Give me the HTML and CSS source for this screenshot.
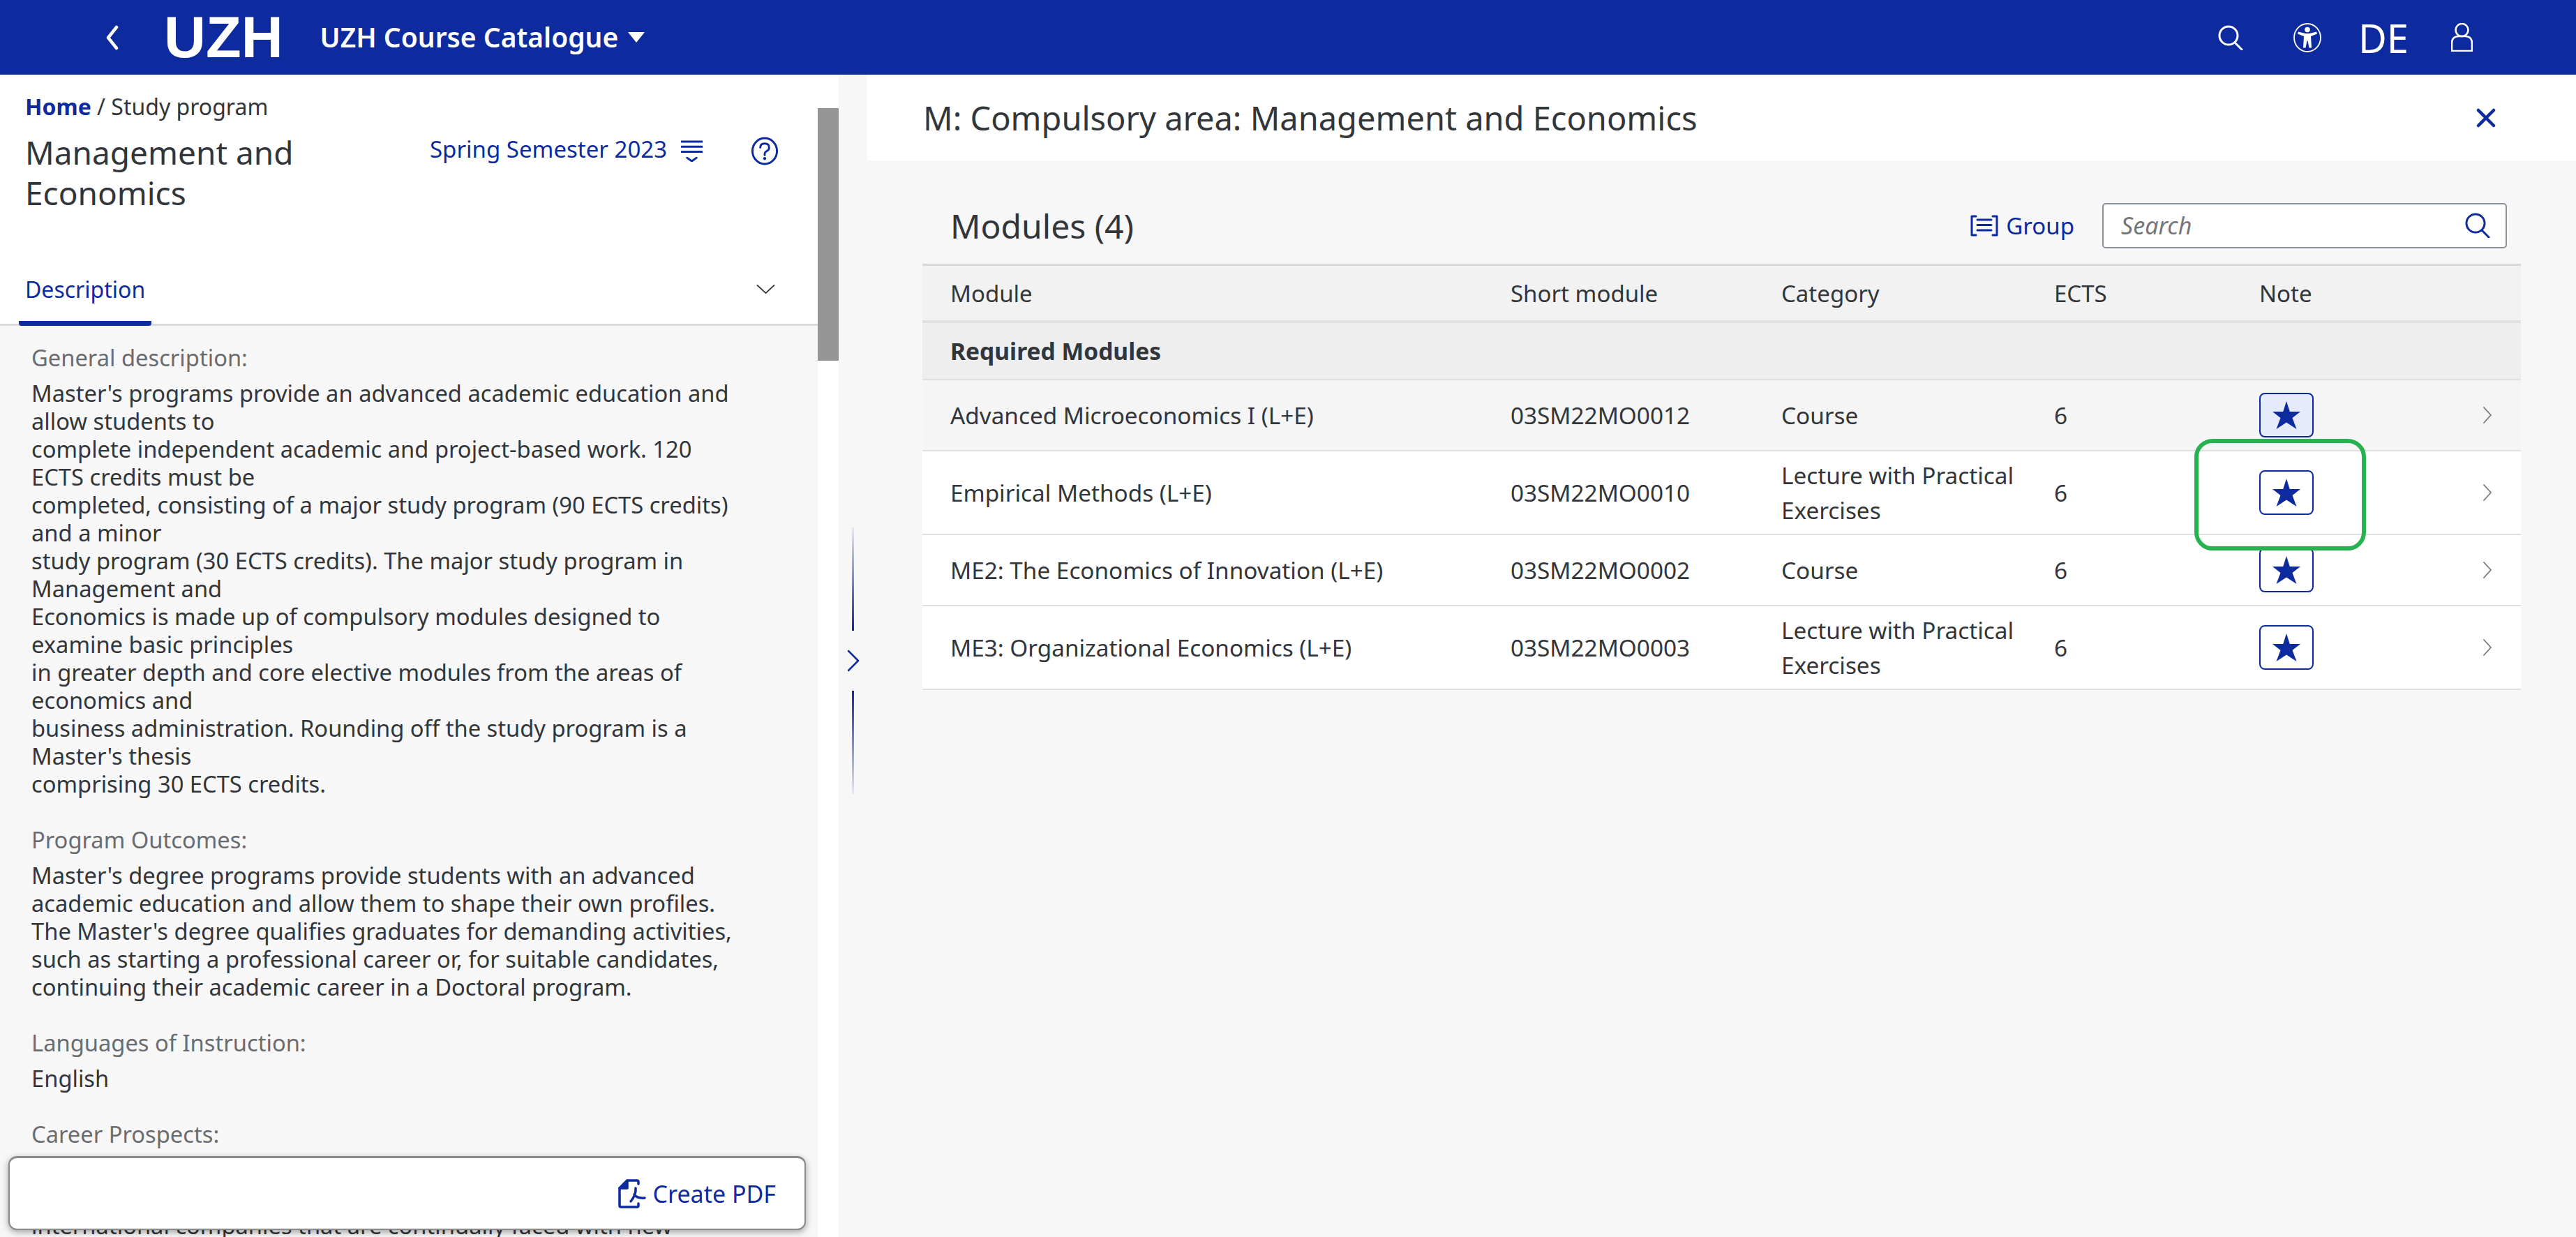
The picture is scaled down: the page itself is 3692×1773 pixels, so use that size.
FILE: index.html
```html
<!DOCTYPE html>
<html lang="en">
<head>
    <meta charset="UTF-8">
    <title>UZH Course Catalogue</title>
    <link rel="stylesheet" href="styles.css">
</head>
<body>
    <header class="shell">
        <svg class="back" viewBox="0 0 20 36"><path d="M17 3 5 18l12 15"/></svg>
        <span class="logo">UZH</span>
        <span class="app-title">UZH Course Catalogue</span>
        <span class="caret"></span>
        <div class="shell-right">
            <svg class="shell-search" viewBox="0 0 36 36"><circle cx="15" cy="15" r="13"/><path d="m24 25 10 10"/></svg>
            <svg class="shell-access" viewBox="0 0 40 42"><ellipse cx="20" cy="21" rx="19" ry="20"/><circle class="fill" cx="20" cy="9.500" r="3.800"/><path class="fill" d="M7 12.500 17 15h6l10-2.500 1 3-9 3.500 1 16.500h-3.500l-2-10h-1l-2 10H14l1-16.500L6 15.500z"/></svg>
            <span class="lang">DE</span>
            <svg class="shell-user" viewBox="0 0 31 41"><circle cx="15.500" cy="10" r="9"/><path d="M1 40V29q0-10 10-10h9q10 0 10 10v11z"/></svg>
        </div>
    </header>

    <main class="layout">
        <section class="left-pane">
            <div class="left-top">
                <div class="crumbs"><a>Home</a> / Study program</div>
                <div class="title-row">
                    <h1>Management and Economics</h1>
                    <span class="semester">Spring Semester 2023</span>
                    <svg class="sem-icon" viewBox="0 0 32 32"><path d="M1 2h30M1 9.500h30M1 17h30M9 26l7 5 7-5"/></svg>
                    <svg class="help" viewBox="0 0 40 42"><ellipse cx="20" cy="21" rx="18" ry="19"/><path d="M13.500 16q0-6 6.500-6t6.500 6q0 3.500-3.500 5t-3 6"/><circle class="fill" cx="20" cy="32" r="2.200"/></svg>
                </div>
                <div class="tabs">
                    <span class="tab">Description</span>
                    <svg class="tab-arrow" viewBox="0 0 28 14"><path d="m1 1 13 12L27 1"/></svg>
                </div>
            </div>
            <div class="left-body">
                <h4>General description:</h4>
                <p>Master's programs provide an advanced academic education and allow students to<br>complete independent academic and project-based work. 120 ECTS credits must be<br>completed, consisting of a major study program (90 ECTS credits) and a minor<br>study program (30 ECTS credits). The major study program in Management and<br>Economics is made up of compulsory modules designed to examine basic principles<br>in greater depth and core elective modules from the areas of economics and<br>business administration. Rounding off the study program is a Master's thesis<br>comprising 30 ECTS credits.</p>
                <h4>Program Outcomes:</h4>
                <p>Master's degree programs provide students with an advanced academic education and allow them to shape their own profiles. The Master's degree qualifies graduates for demanding activities, such as starting a professional career or, for suitable candidates, continuing their academic career in a Doctoral program.</p>
                <h4>Languages of Instruction:</h4>
                <p>English</p>
                <h4>Career Prospects:</h4>
                <p class="under-bar">international companies that are continually faced with new</p>
            </div>
            <div class="pdf-bar">
                <svg class="pdf-icon" viewBox="0 0 40 42"><path d="M29 7V4q0-2-2-2H13L2 13v25q0 2 2 2h23q2 0 2-2v-3"/><path class="corner" d="M13 2 2 13h11z"/><path d="M25 13q1 9-7 19M23 22q4 6 15 5"/></svg>
                <span>Create PDF</span>
            </div>
        </section>

        <div class="scroll-track"><div class="scroll-thumb"></div></div>

        <div class="splitter">
            <span class="split-line up"></span>
            <svg class="split-arrow" viewBox="0 0 18 32"><path d="m2 2 14 14L2 30"/></svg>
            <span class="split-line down"></span>
        </div>

        <section class="right-pane">
            <div class="right-head">
                <h2>M: Compulsory area: Management and Economics</h2>
                <svg class="close" viewBox="0 0 28 28"><path d="m3 3 22 22M25 3 3 25"/></svg>
            </div>
            <div class="right-body">
                <div class="toolbar">
                    <h3>Modules (4)</h3>
                    <svg class="group-icon" viewBox="0 0 40 31"><path d="M8 2H2v27h6M32 2h6v27h-6M10 7h20M10 14.500h20M10 22h20"/></svg>
                    <span class="group-text">Group</span>
                    <div class="search">
                        <span>Search</span>
                        <svg viewBox="0 0 36 36"><circle cx="15" cy="15" r="13"/><path d="m24 25 10 10"/></svg>
                    </div>
                </div>
                <div class="table">
                    <div class="row head"><span>Module</span><span>Short module</span><span>Category</span><span>ECTS</span><span>Note</span></div>
                    <div class="row group"><b>Required Modules</b></div>
                    <div class="row item shaded">
                        <span>Advanced Microeconomics I (L+E)</span><span>03SM22MO0012</span><span>Course</span><span>6</span>
                        <button class="star-btn on"><svg viewBox="0 0 40 40"><path d="M20 0l4.800 15H40L28.500 24 34.500 40 20 30.500 5.500 40 11.500 24 0 15h15.200z"/></svg></button>
                        <svg class="row-arrow" viewBox="0 0 14 24"><path d="m2 1 10 11L2 23"/></svg>
                    </div>
                    <div class="row item tall">
                        <span>Empirical Methods (L+E)</span><span>03SM22MO0010</span><span>Lecture with Practical Exercises</span><span>6</span>
                        <button class="star-btn"><svg viewBox="0 0 40 40"><path d="M20 0l4.800 15H40L28.500 24 34.500 40 20 30.500 5.500 40 11.500 24 0 15h15.200z"/></svg></button>
                        <svg class="row-arrow" viewBox="0 0 14 24"><path d="m2 1 10 11L2 23"/></svg>
                    </div>
                    <div class="row item">
                        <span>ME2: The Economics of Innovation (L+E)</span><span>03SM22MO0002</span><span>Course</span><span>6</span>
                        <button class="star-btn"><svg viewBox="0 0 40 40"><path d="M20 0l4.800 15H40L28.500 24 34.500 40 20 30.500 5.500 40 11.500 24 0 15h15.200z"/></svg></button>
                        <svg class="row-arrow" viewBox="0 0 14 24"><path d="m2 1 10 11L2 23"/></svg>
                    </div>
                    <div class="row item tall">
                        <span>ME3: Organizational Economics (L+E)</span><span>03SM22MO0003</span><span>Lecture with Practical Exercises</span><span>6</span>
                        <button class="star-btn"><svg viewBox="0 0 40 40"><path d="M20 0l4.800 15H40L28.500 24 34.500 40 20 30.500 5.500 40 11.500 24 0 15h15.200z"/></svg></button>
                        <svg class="row-arrow" viewBox="0 0 14 24"><path d="m2 1 10 11L2 23"/></svg>
                    </div>
                </div>
            </div>
        </section>
    </main>

    <div class="highlight"></div>
</body>
</html>
```

FILE: styles.css
```css
* {
    box-sizing: border-box;
}
html, body {
    margin: 0;
    height: 100%;
    overflow: hidden;
}
body {
    font-family: "Noto Sans", "Open Sans", Arial, sans-serif;
    font-size: 33px;
    color: #32363a;
    background: #f7f7f7;
}
svg {
    display: block;
    fill: none;
    stroke-linecap: round;
    stroke-linejoin: round;
}
svg .fill {
    fill: currentColor;
    stroke: none;
}

/* top bar */
.shell {
    height: 107px;
    background: #0d2a9e;
    color: #fff;
    display: flex;
    align-items: center;
}
.back {
    width: 20px;
    height: 36px;
    margin-left: 150px;
    stroke: #fff;
    stroke-width: 4.500;
}
.logo {
    margin-left: 65px;
    font: bold 83px "Liberation Sans", Arial, sans-serif;
    line-height: 1;
}
.app-title {
    margin: 0 0 3px 53px;
    font-size: 39px;
    font-weight: 600;
}
.caret {
    margin-left: 14px;
    width: 0;
    height: 0;
    border-left: 12px solid transparent;
    border-right: 12px solid transparent;
    border-top: 15px solid #fff;
}
.shell-right {
    margin-left: auto;
    display: flex;
    align-items: center;
    padding-right: 148px;
}
.shell-right svg {
    stroke: #fff;
}
.shell-search {
    width: 36px;
    height: 36px;
    stroke-width: 3;
}
.shell-access {
    width: 40px;
    height: 42px;
    margin-left: 72px;
    stroke-width: 1.800;
}
.lang {
    margin-left: 53px;
    font-size: 56px;
    line-height: 1;
}
.shell-user {
    width: 31px;
    height: 41px;
    margin-left: 61px;
    stroke-width: 2.600;
}

/* panes */
.layout {
    display: flex;
    height: 1666px;
}
.left-pane {
    position: relative;
    width: 1172px;
    flex: none;
    display: flex;
    flex-direction: column;
    overflow: hidden;
}
.left-top {
    background: #fff;
    height: 360px;
    flex: none;
    display: flex;
    flex-direction: column;
    padding: 24px 36px 0;
    border-bottom: 3px solid #d9d9d9;
}
.crumbs {
    font-size: 32px;
    line-height: 44px;
}
.crumbs a {
    color: #0d2a9e;
    font-weight: 700;
}
.title-row {
    display: flex;
    margin-top: 14px;
    align-items: flex-start;
}
.title-row h1 {
    margin: 0;
    width: 580px;
    font-size: 46px;
    font-weight: 400;
    line-height: 58px;
}
.semester {
    color: #0d2a9e;
    line-height: 50px;
}
.sem-icon {
    width: 31px;
    height: 31px;
    margin: 12px 0 0 20px;
    stroke: #0d2a9e;
    stroke-width: 3;
}
.help {
    width: 40px;
    height: 41px;
    margin: 7px 0 0 69px;
    stroke: #0d2a9e;
    color: #0d2a9e;
    stroke-width: 3;
}
.tabs {
    margin-top: auto;
    margin-bottom: -3px;
    display: flex;
    justify-content: space-between;
    align-items: flex-start;
    padding-right: 25px;
}
.tab {
    color: #0d2a9e;
    font-size: 32px;
    line-height: 50px;
    height: 77px;
    border-bottom: 7px solid #0d2a9e;
    border-radius: 0 0 4px 4px;
    padding: 0 9px;
    margin-left: -9px;
}
.tab-arrow {
    width: 27px;
    height: 13px;
    margin-top: 18px;
    stroke: #32363a;
    stroke-width: 2;
}
.left-body {
    padding: 26px 110px 0 45px;
    font-size: 32.700px;
    line-height: 40px;
}
.left-body h4 {
    margin: 0 0 11px;
    font-size: 32.700px;
    font-weight: 400;
    color: #6a6d70;
    line-height: 40px;
}
.left-body p {
    margin: 0 0 40px;
}
.left-body p.under-bar {
    padding-top: 80px;
    white-space: nowrap;
}
.pdf-bar {
    position: absolute;
    left: 12px;
    top: 1550px;
    width: 1143px;
    height: 106px;
    background: #fff;
    border: 2px solid #8a8a8a;
    border-top-width: 3px;
    border-radius: 12px;
    box-shadow: 0 3px 10px rgba(0, 0, 0, 0.35);
    display: flex;
    align-items: center;
    justify-content: flex-end;
    padding-right: 41px;
    font-size: 34px;
    color: #0d2a9e;
}
.pdf-icon {
    width: 40px;
    height: 42px;
    margin-right: 10px;
    stroke: #0d2a9e;
    stroke-width: 3.500;
}
.pdf-icon .corner {
    fill: #0d2a9e;
}

.scroll-track {
    width: 30px;
    flex: none;
    background: #fff;
}
.scroll-thumb {
    margin-top: 48px;
    height: 362px;
    background: #959595;
}

.splitter {
    width: 41px;
    flex: none;
    display: flex;
    flex-direction: column;
    align-items: center;
    padding-top: 649px;
}
.split-line {
    width: 3px;
    height: 148px;
}
.split-line.up {
    background: linear-gradient(to bottom, #e6e9f4, #0d2a9e);
}
.split-line.down {
    background: linear-gradient(to top, #e6e9f4, #0d2a9e);
}
.split-arrow {
    width: 18px;
    height: 32px;
    margin: 27px 0;
    stroke: #0d2a9e;
    stroke-width: 2.500;
}

.right-pane {
    flex: 1;
    display: flex;
    flex-direction: column;
}
.right-head {
    background: #fff;
    height: 123px;
    flex: none;
    display: flex;
    align-items: center;
    justify-content: space-between;
    padding: 0 115px 0 80px;
}
.right-head h2 {
    margin: 0;
    font-size: 47px;
    font-weight: 400;
}
.close {
    width: 28px;
    height: 28px;
    stroke: #0d2a9e;
    stroke-width: 4.500;
}
.right-body {
    padding: 0 79px;
}
.toolbar {
    height: 148px;
    display: flex;
    align-items: center;
    padding: 38px 20px 0 40px;
}
.toolbar h3 {
    margin: 0 auto 0 0;
    font-size: 48px;
    font-weight: 400;
}
.group-icon {
    width: 40px;
    height: 31px;
    stroke: #0d2a9e;
    stroke-width: 3;
}
.group-text {
    color: #0d2a9e;
    margin: 0 40px 0 11px;
}
.search {
    width: 580px;
    height: 65px;
    background: #fff;
    border: 2px solid #89919a;
    border-radius: 5px;
    display: flex;
    align-items: center;
    justify-content: space-between;
    padding: 0 22px 0 25px;
    font-size: 34px;
    font-style: italic;
    color: #74777a;
}
.search svg {
    width: 36px;
    height: 36px;
    stroke: #0d2a9e;
    stroke-width: 3;
}
.row {
    display: grid;
    grid-template-columns: 803px 388px 391px 294px 320px 1fr;
    align-items: center;
    padding-left: 40px;
    border-bottom: 2px solid #e0e0e0;
}
.row.head {
    height: 85px;
    background: #f2f2f2;
    border-top: 3px solid #d9d9d9;
    border-bottom-width: 4px;
}
.row.group {
    height: 82px;
    background: #eee;
    font-size: 33.600px;
}
.row.item {
    height: 102px;
    background: #fff;
    font-size: 33.300px;
}
.row.item.tall {
    height: 120px;
}
.row.item.shaded {
    background: #f5f5f5;
}
.row.item > span {
    line-height: 50px;
}
.star-btn {
    width: 78px;
    height: 64px;
    padding: 0;
    background: #fff;
    border: 2px solid #0d2a9e;
    border-radius: 8px;
    display: flex;
    align-items: center;
    justify-content: center;
}
.star-btn.on {
    background: #e5ebfb;
}
.star-btn svg {
    width: 40px;
    height: 40px;
    fill: #0d2a9e;
}
.row-arrow {
    width: 14px;
    height: 24px;
    stroke: #74777a;
    stroke-width: 1.800;
}

/* green marker drawn over the table */
.highlight {
    position: absolute;
    left: 3145px;
    top: 629px;
    width: 246px;
    height: 160px;
    border: 6px solid #27b24f;
    border-radius: 26px;
}
```
